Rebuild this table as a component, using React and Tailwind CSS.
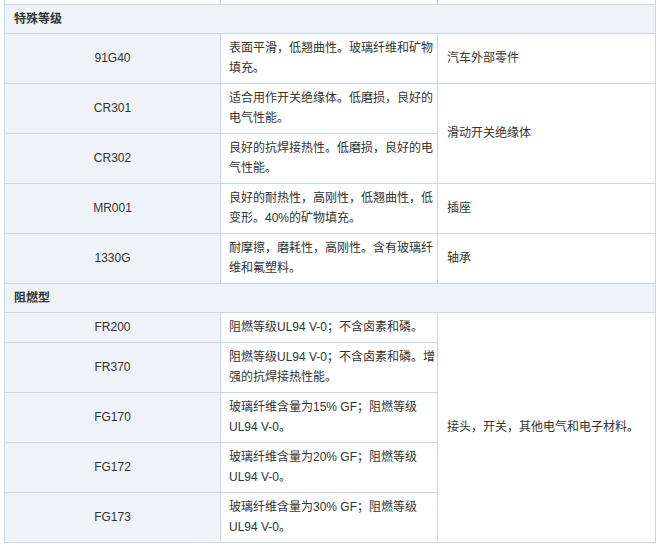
const groups = [
  {
    title: '特殊等级',
    rows: [
      { code: '91G40', desc: ['表面平滑，低翘曲性。玻璃纤维和矿物', '填充。'], use: '汽车外部零件', span: 1 },
      { code: 'CR301', desc: ['适合用作开关绝缘体。低磨损，良好的', '电气性能。'], use: '滑动开关绝缘体', span: 2 },
      { code: 'CR302', desc: ['良好的抗焊接热性。低磨损，良好的电', '气性能。'] },
      { code: 'MR001', desc: ['良好的耐热性，高刚性，低翘曲性，低', '变形。40%的矿物填充。'], use: '插座', span: 1 },
      { code: '1330G', desc: ['耐摩擦，磨耗性，高刚性。含有玻璃纤', '维和氟塑料。'], use: '轴承', span: 1 },
    ],
  },
  {
    title: '阻燃型',
    rows: [
      { code: 'FR200', desc: ['阻燃等级UL94 V-0；不含卤素和磷。'], use: '接头，开关，其他电气和电子材料。', span: 5 },
      { code: 'FR370', desc: ['阻燃等级UL94 V-0；不含卤素和磷。增', '强的抗焊接热性能。'] },
      { code: 'FG170', desc: ['玻璃纤维含量为15% GF；阻燃等级', 'UL94 V-0。'] },
      { code: 'FG172', desc: ['玻璃纤维含量为20% GF；阻燃等级', 'UL94 V-0。'] },
      { code: 'FG173', desc: ['玻璃纤维含量为30% GF；阻燃等级', 'UL94 V-0。'] },
    ],
  },
];

const cell = 'border border-[#c6d8eb] align-middle';

const App = () => {
  return (
    <div
      className="min-h-[546px] w-[659px] bg-white pl-[4px] text-[12px] leading-[20px] text-[#333]"
      style={{ fontFamily: '"Liberation Sans", "Noto Sans CJK SC", sans-serif' }}
    >
      <table className="w-[651px] table-fixed border-collapse">
        <colgroup>
          <col className="w-[216px]" />
          <col className="w-[217px]" />
          <col className="w-[218px]" />
        </colgroup>
        <tbody>
          <tr>
            <td className={`${cell} h-[4px] border-t-0 p-0`} />
            <td className={`${cell} h-[4px] border-t-0 p-0`} />
            <td className={`${cell} h-[4px] border-t-0 p-0`} />
          </tr>
          {groups.map((g) => (
            <Group key={g.title} group={g} />
          ))}
        </tbody>
      </table>
    </div>
  );
};

const Group = ({ group }) => (
  <>
    <tr>
      <td colSpan={3} className={`${cell} bg-[#eff3f8] pt-[4px] pb-[4px] pl-[9px] font-bold`}>
        {group.title}
      </td>
    </tr>
    {group.rows.map((r) => (
      <tr key={r.code}>
        <td className={`${cell} bg-[#eff3f8] pt-[4px] pb-[5px] text-center`}>{r.code}</td>
        <td className={`${cell} whitespace-nowrap pt-[4px] pb-[5px] pl-[8px] pr-0`}>
          {r.desc.map((line, i) => (
            <div key={i}>{line}</div>
          ))}
        </td>
        {r.use && (
          <td rowSpan={r.span} className={`${cell} py-[4px] pl-[9px]`}>
            {r.use}
          </td>
        )}
      </tr>
    ))}
  </>
);

export default App;
